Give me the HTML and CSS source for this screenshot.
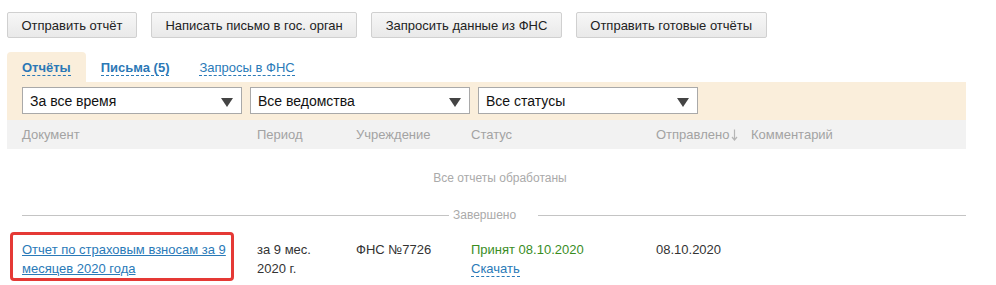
FILE: index.html
```html
<!DOCTYPE html>
<html lang="ru">
<head>
    <meta charset="UTF-8">
    <title>Отчёты</title>
    <link rel="stylesheet" href="styles.css">
</head>
<body>
    <div class="page">
        <div class="toolbar">
            <button class="btn">Отправить отчёт</button>
            <button class="btn">Написать письмо в гос. орган</button>
            <button class="btn">Запросить данные из ФНС</button>
            <button class="btn">Отправить готовые отчёты</button>
        </div>

        <div class="tabs">
            <div class="tab active"><span class="tab-link bold">Отчёты</span></div>
            <div class="tab"><span class="tab-link bold">Письма (5)</span></div>
            <div class="tab"><span class="tab-link">Запросы в ФНС</span></div>
        </div>

        <div class="filters">
            <div class="select"><span>За все время</span><i class="arrow"></i></div>
            <div class="select"><span>Все ведомства</span><i class="arrow"></i></div>
            <div class="select"><span>Все статусы</span><i class="arrow"></i></div>
        </div>

        <div class="grid head">
            <div>Документ</div>
            <div>Период</div>
            <div>Учреждение</div>
            <div>Статус</div>
            <div class="sorted">Отправлено
                <svg width="7" height="12" viewBox="0 0 7 12"><path d="M3.5 0.5v10M1 8l2.5 3L6 8" fill="none" stroke="#b5b5b5" stroke-width="1.2"/></svg>
            </div>
            <div>Комментарий</div>
        </div>

        <div class="empty">Все отчеты обработаны</div>

        <div class="divider">
            <span class="line short"></span>
            <span class="divider-text">Завершено</span>
            <span class="line"></span>
        </div>

        <div class="grid row">
            <div class="doc"><a href="#">Отчет по страховым взносам за 9 месяцев 2020 года</a></div>
            <div class="cell">за 9 мес.<br>2020 г.</div>
            <div class="cell">ФНС №7726</div>
            <div class="cell">
                <div class="accepted">Принят 08.10.2020</div>
                <span class="download">Скачать</span>
            </div>
            <div class="cell">08.10.2020</div>
            <div class="cell"></div>
        </div>
    </div>
</body>
</html>
```

FILE: styles.css
```css
* {
    margin: 0;
    padding: 0;
    box-sizing: border-box;
}

body {
    font-family: 'Liberation Sans', Arial, sans-serif;
    font-size: 13px;
    color: #333;
    background: #fff;
}

.page {
    width: 966px;
    padding: 12px 0 0 7px;
}

.toolbar {
    display: flex;
    gap: 14px;
}

.btn {
    height: 26px;
    padding: 0 13.5px;
    font-family: inherit;
    font-size: 13px;
    color: #222;
    border: 1px solid #d0d0d0;
    border-radius: 2px;
    background: linear-gradient(#f7f7f7, #e9e9e9);
}

.tabs {
    display: flex;
    margin-top: 14px;
}

.tab {
    height: 30px;
    padding: 8px 15px 0;
    border-radius: 4px 4px 0 0;
}

.tab.active {
    background: #faeedb;
}

.tab-link {
    color: #2a7ab8;
    border-bottom: 1px dashed #2a7ab8;
}

.tab-link.bold {
    font-weight: bold;
    color: #2b78b6;
}

.filters {
    display: flex;
    gap: 8px;
    height: 38px;
    padding: 5px 15px 0;
    background: #faeedb;
}

.select {
    position: relative;
    display: flex;
    align-items: center;
    width: 220px;
    height: 27px;
    padding: 0 7px;
    background: #fff;
    border: 1px solid #a9a9a9;
    font-size: 14px;
    color: #111;
}

.arrow {
    position: absolute;
    right: 8px;
    top: 10px;
    border-left: 6px solid transparent;
    border-right: 6px solid transparent;
    border-top: 9px solid #444;
}

.grid {
    display: grid;
    grid-template-columns: 235px 99px 115px 185px 95px 1fr;
    padding-left: 15px;
}

.head {
    height: 29px;
    align-items: center;
    background: #f2f2f2;
    color: #a3a3a3;
}

.sorted {
    display: flex;
    align-items: center;
    gap: 2px;
}

.empty {
    margin-top: 22px;
    text-align: center;
    color: #aaa;
    font-size: 12px;
    padding-left: 27px;
}

.divider {
    display: flex;
    align-items: center;
    margin: 23px 0 0 15px;
    color: #aaa;
    font-size: 12px;
}

.line {
    flex: 1;
    height: 1px;
    background: #c4c4c4;
}

.line.short {
    flex: 0 0 427px;
}

.divider-text {
    padding: 0 22px 0 4px;
}

.row {
    margin-top: 10px;
    align-items: start;
    line-height: 19px;
    color: #333;
}

.doc {
    margin-left: -12px;
    width: 224px;
    padding: 5px 5px 0 9px;
    border: 3px solid #e53935;
    border-radius: 4px;
}

.doc a {
    color: #2a7ab8;
}

.cell {
    padding-top: 8px;
}

.accepted {
    color: #3a8d1f;
}

.download {
    color: #2a7ab8;
    border-bottom: 1px dashed #2a7ab8;
}
```
